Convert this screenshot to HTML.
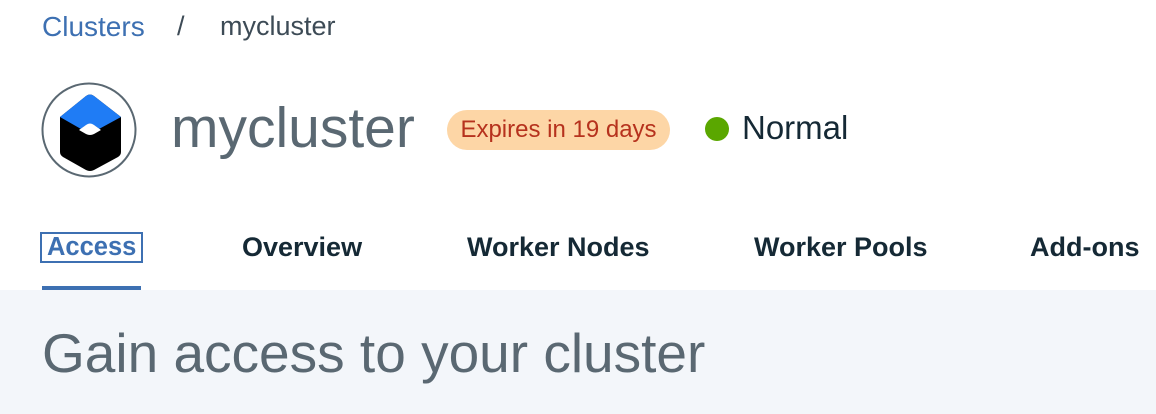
<!DOCTYPE html>
<html><head><style>
body{margin:0;width:1156px;height:414px;overflow:hidden;background:#fff;font-family:"Liberation Sans",sans-serif;position:relative}
.a{position:absolute;white-space:nowrap}
</style></head><body>
<div class="a" style="left:42px;top:11px;font-size:28px;color:#3d70b2">Clusters</div>
<div class="a" style="left:177px;top:11px;font-size:27px;color:#3d4b56">/</div>
<div class="a" style="left:220px;top:11px;font-size:27px;color:#3d4b56">mycluster</div>
<svg class="a" style="left:41px;top:82px" width="98" height="98" viewBox="0 0 98 98">
<circle cx="48" cy="48" r="46.5" fill="#fff" stroke="#5a6872" stroke-width="2"/>
<path d="M19 35 L45 14 Q49 11 53 14 L80 35 L80 70 Q80 73 77 75 L53 88 Q49 90 45 88 L22 75 Q19 73 19 70 Z" fill="#000"/>
<path d="M19 35 L45 14 Q49 11 53 14 L80 35 L58 47 Q49 38 40 47 Z" fill="#1f7cf5"/>
<path d="M38 48 L45 43 Q49 40 53 43 L60 48 L53 52 Q49 54 45 52 Z" fill="#fff"/>
</svg>
<div class="a" style="left:171px;top:95px;font-size:57px;color:#5a6872">mycluster</div>
<div class="a" style="left:447px;top:110px;width:223px;height:40px;border-radius:20px;background:#fdd6a6;color:#b6321d;font-size:24px;line-height:40px;text-align:center">Expires in 19 days</div>
<div class="a" style="left:705px;top:117px;width:24px;height:24px;border-radius:50%;background:#5aa700"></div>
<div class="a" style="left:742px;top:109px;font-size:33px;color:#152935">Normal</div>
<div class="a" style="left:40px;top:232px;width:103px;height:31px;border:2px solid #3d70b2;box-sizing:border-box"></div>
<div class="a" style="left:47px;top:233px;font-size:25.5px;font-weight:bold;color:#3d70b2">Access</div>
<div class="a" style="left:242px;top:232px;font-size:27px;font-weight:bold;color:#152935">Overview</div>
<div class="a" style="left:467px;top:232px;font-size:27px;font-weight:bold;color:#152935">Worker Nodes</div>
<div class="a" style="left:754px;top:232px;font-size:27px;font-weight:bold;color:#152935">Worker Pools</div>
<div class="a" style="left:1030px;top:232px;font-size:27px;font-weight:bold;color:#152935">Add-ons</div>
<div class="a" style="left:0;top:290px;width:1156px;height:124px;background:#f3f6fa"></div>
<div class="a" style="left:42px;top:286px;width:99px;height:4px;background:#3d70b2"></div>
<div class="a" style="left:42px;top:321px;font-size:55px;color:#5a6872">Gain access to your cluster</div>
</body></html>
